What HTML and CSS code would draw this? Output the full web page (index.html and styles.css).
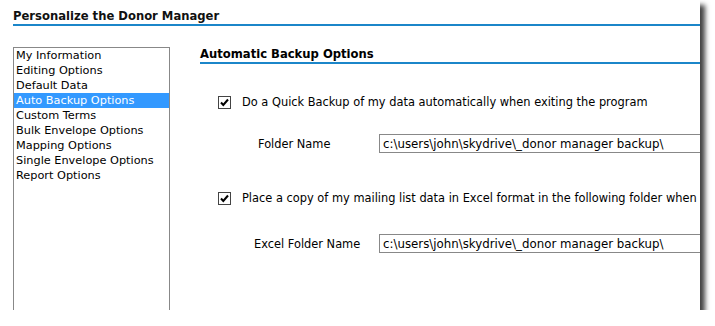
FILE: index.html
```html
<!DOCTYPE html>
<html lang="en">
<head>
    <meta charset="UTF-8">
    <title>Personalize the Donor Manager</title>
    <link rel="stylesheet" href="styles.css">
</head>
<body>
    <div class="dialog">
        <h1 class="dialog-title">Personalize the Donor Manager</h1>
        <div class="dialog-body">
            <ul class="option-list">
                <li>My Information</li>
                <li>Editing Options</li>
                <li>Default Data</li>
                <li class="selected">Auto Backup Options</li>
                <li>Custom Terms</li>
                <li>Bulk Envelope Options</li>
                <li>Mapping Options</li>
                <li>Single Envelope Options</li>
                <li>Report Options</li>
            </ul>
            <div class="option-panel">
                <h2>Automatic Backup Options</h2>

                <div class="check-row first">
                    <svg class="checkbox" width="13" height="13" viewBox="0 0 13 13">
                        <rect x="0.5" y="0.5" width="12" height="12" fill="#fff" stroke="#444"/>
                        <path d="M3 6.5 L5.3 9 L10 3.5" fill="none" stroke="#000" stroke-width="2"/>
                    </svg>
                    <span>Do a Quick Backup of my data automatically when exiting the program</span>
                </div>
                <div class="field-row">
                    <span class="field-label indent">Folder Name</span>
                    <input type="text" value="c:\users\john\skydrive\_donor manager backup\">
                </div>

                <div class="check-row second">
                    <svg class="checkbox" width="13" height="13" viewBox="0 0 13 13">
                        <rect x="0.5" y="0.5" width="12" height="12" fill="#fff" stroke="#444"/>
                        <path d="M3 6.5 L5.3 9 L10 3.5" fill="none" stroke="#000" stroke-width="2"/>
                    </svg>
                    <span>Place a copy of my mailing list data in Excel format in the following folder when</span>
                </div>
                <div class="field-row last">
                    <span class="field-label">Excel Folder Name</span>
                    <input type="text" value="c:\users\john\skydrive\_donor manager backup\">
                </div>
            </div>
        </div>
    </div>
</body>
</html>
```

FILE: styles.css
```css
body {
    margin: 0;
    background-color: #fff;
    font-family: 'DejaVu Sans', Verdana, sans-serif;
    font-size: 11.4px;
    color: #000;
}
.dialog {
    width: 700px;
    height: 310px;
    background-color: #fff;
    box-shadow: 5px 5px 5px rgba(0, 0, 0, 0.75);
    overflow: hidden;
    display: flex;
    flex-direction: column;
}
.dialog-title {
    margin: 9px 0 0 13px;
    font-size: 11.6px;
    font-weight: bold;
    line-height: 15px;
    color: #111;
    border-bottom: 2px solid #1b86c9;
    white-space: nowrap;
}
.dialog-body {
    display: flex;
    gap: 30px;
    margin: 21px 0 0 13px;
}
.option-list {
    list-style: none;
    margin: 0;
    padding: 0;
    width: 155px;
    height: 290px;
    flex-shrink: 0;
    border: 1px solid #888;
    font-size: 11.3px;
}
.option-list li {
    line-height: 15px;
    padding-left: 2px;
    white-space: nowrap;
}
.option-list .selected {
    background-color: #3399ff;
    color: #fff;
}
.option-panel {
    flex: 1;
    min-width: 0;
}
.option-panel h2 {
    margin: 0;
    font-size: 11.6px;
    font-weight: bold;
    line-height: 15px;
    border-bottom: 2px solid #1b86c9;
    white-space: nowrap;
}
.check-row {
    display: flex;
    align-items: center;
    gap: 11px;
    padding-left: 18px;
    line-height: 15px;
    white-space: nowrap;
}
.check-row.first {
    margin-top: 31px;
}
.check-row.second {
    margin-top: 38px;
}
.checkbox {
    flex-shrink: 0;
}
.field-row {
    display: flex;
    align-items: center;
    margin-top: 24px;
    padding-left: 54px;
}
.field-row.last {
    margin-top: 28px;
}
.field-label {
    width: 125px;
    flex-shrink: 0;
    white-space: nowrap;
}
.field-label.indent {
    padding-left: 4px;
    width: 121px;
}
.field-row input {
    width: 420px;
    height: 19px;
    box-sizing: border-box;
    flex-shrink: 0;
    border: 1px solid #888;
    padding: 0 3px;
    font-family: 'DejaVu Sans', Verdana, sans-serif;
    font-size: 11.8px;
    color: #000;
}
```
